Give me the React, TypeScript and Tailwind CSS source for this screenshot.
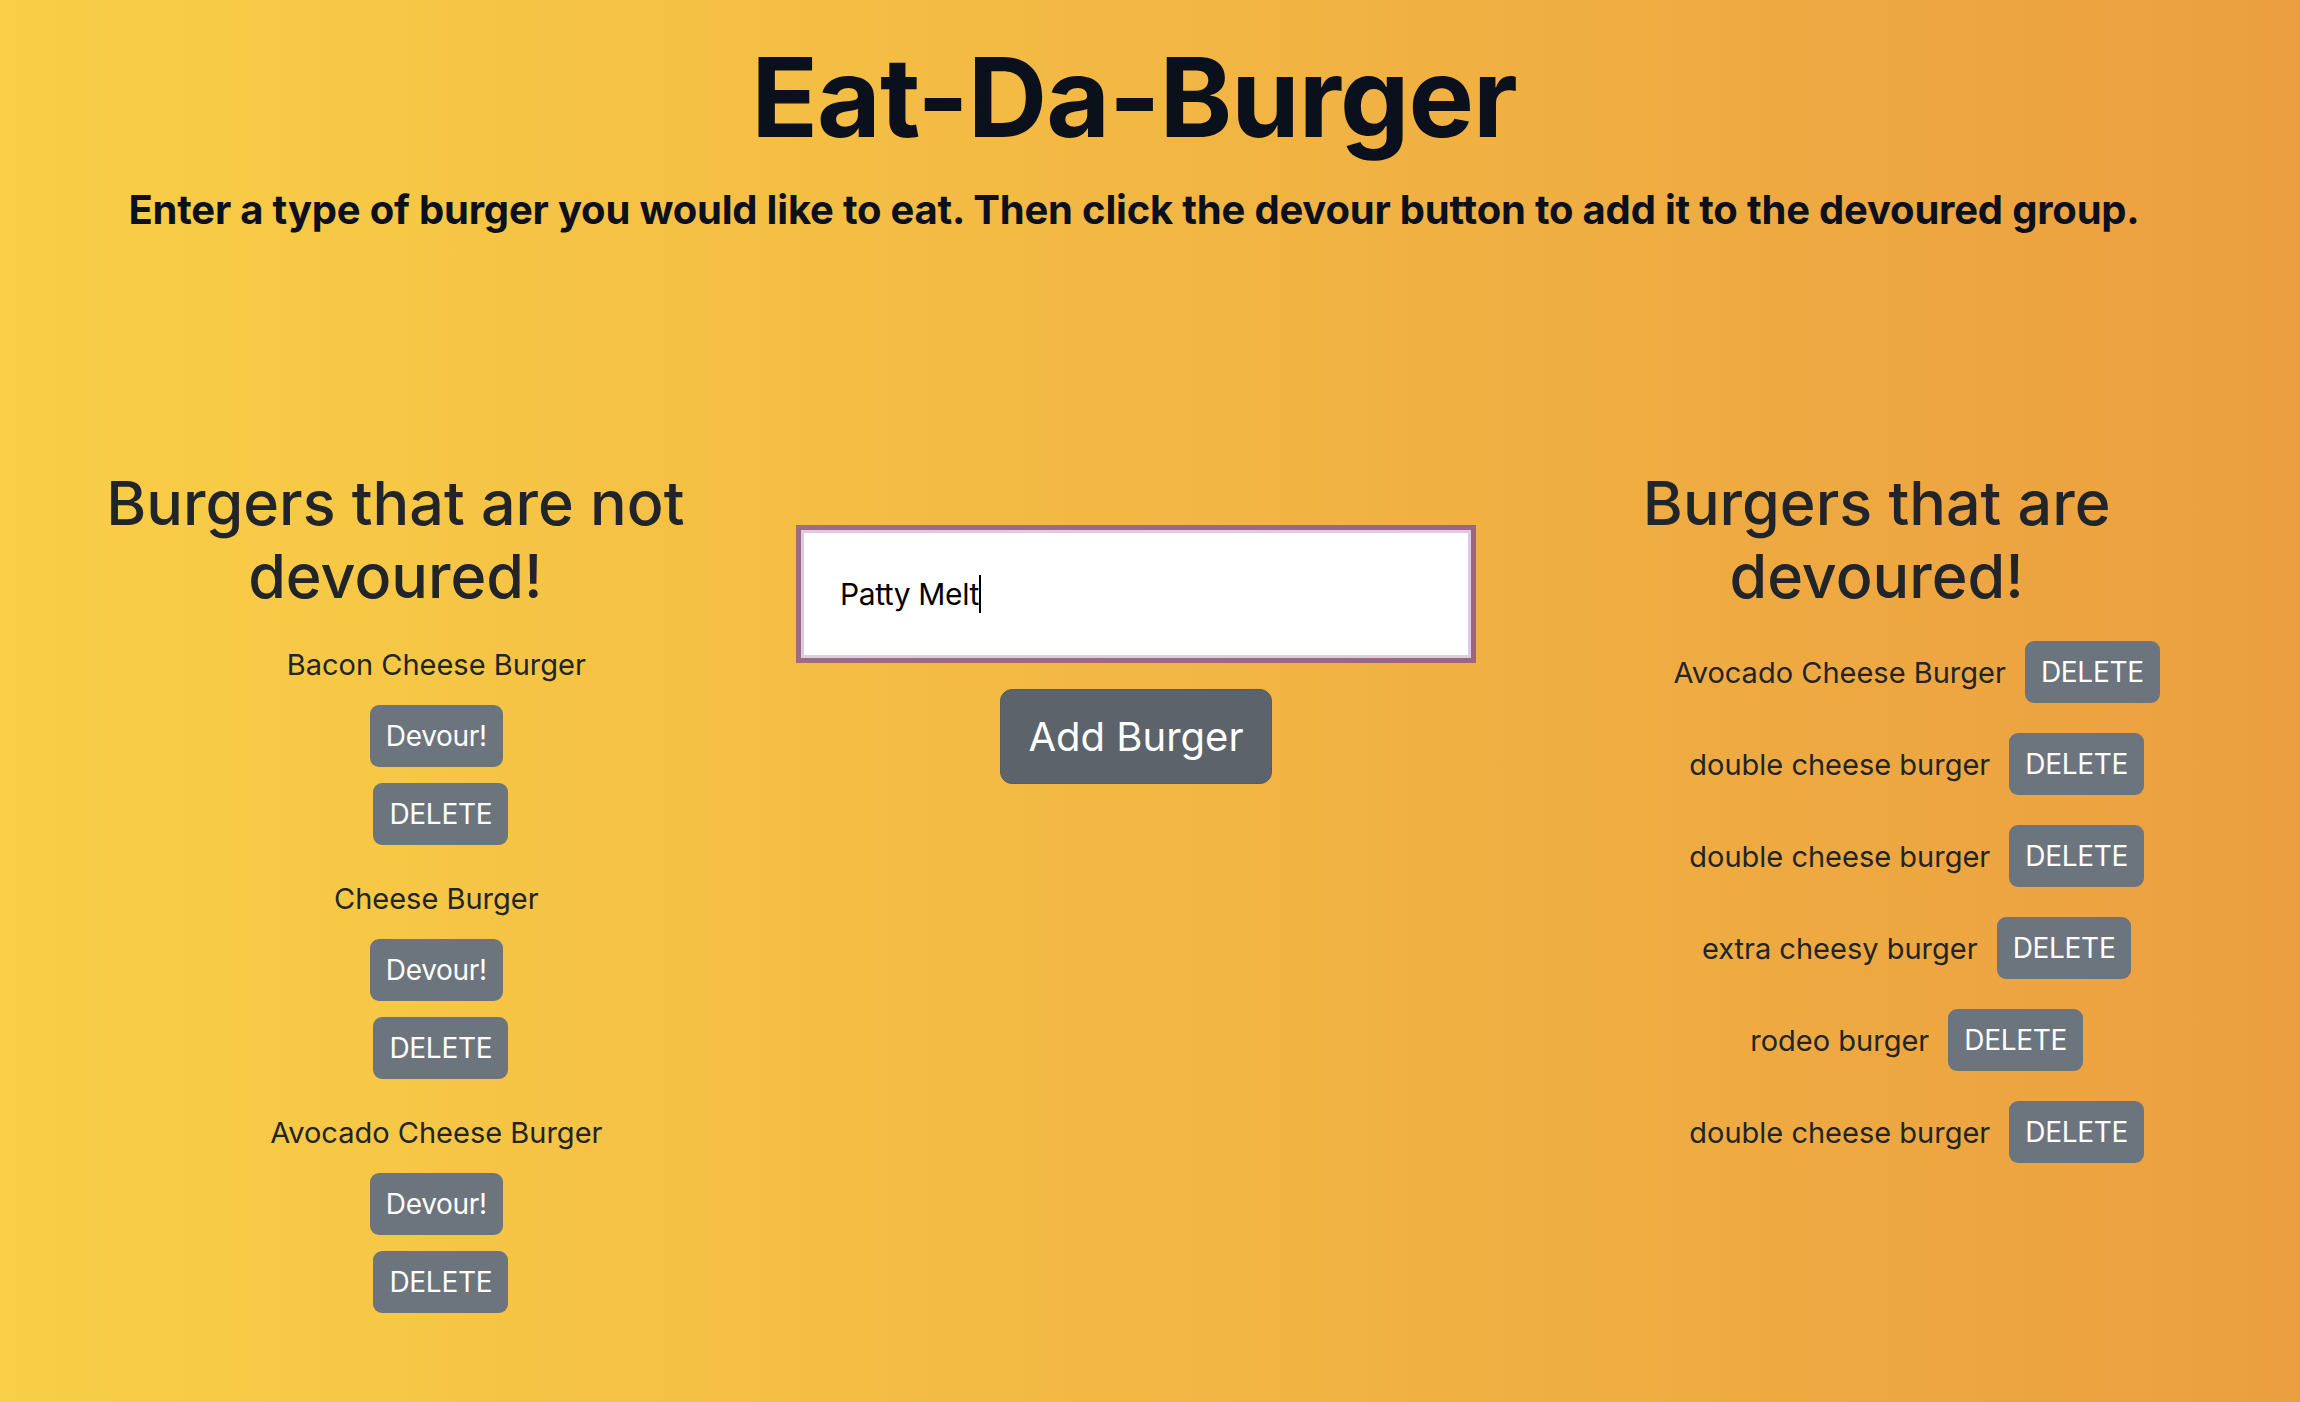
import { useState } from "react";

const notDevoured = ["Bacon Cheese Burger", "Cheese Burger", "Avocado Cheese Burger"];
const devoured = [
    "Avocado Cheese Burger",
    "double cheese burger",
    "double cheese burger",
    "extra cheesy burger",
    "rodeo burger",
    "double cheese burger",
];

function SmallButton({ label, className = "" }: { label: string; className?: string }) {
    return (
        <button className={`h-[62px] px-[16px] rounded-[9px] bg-[#6c757d] text-white text-[28px] leading-none tracking-[-0.3px] ${className}`}>
            {label}
        </button>
    );
}

export default function App() {
    const [burger] = useState("Patty Melt");

    return (
        <div className="min-h-[1402px] w-full bg-[linear-gradient(to_right,#f9cf47,#eb9f40)] font-['Inter',sans-serif] text-[#212529]">
            <header className="text-center pr-[32px] text-[#0b111c]">
                <h1 className="pt-[41px] text-[110px] leading-[112px] font-bold tracking-[-1px]">Eat-Da-Burger</h1>
                <p className="mt-[33px] text-[40px] leading-[48px] font-bold tracking-[-0.2px]">
                    Enter a type of burger you would like to eat. Then click the devour button to add it to the devoured group.
                </p>
            </header>

            <main className="ml-[25px] w-[2222px] mt-[233px] grid grid-cols-3">
                {/* not devoured */}
                <section className="flex flex-col items-center">
                    <h2 className="text-[61px] leading-[73px] font-medium text-center">
                        Burgers that are not<br />devoured!
                    </h2>
                    <ul className="mt-[30px] pl-[82px] flex flex-col items-center">
                        {notDevoured.map((b, i) => (
                            <li key={i} className="flex flex-col items-center mb-[32px]">
                                <span className="text-[29px] leading-[43px]">{b}</span>
                                <SmallButton label="Devour!" className="mt-[19px]" />
                                <SmallButton label="DELETE" className="mt-[16px] ml-[9px]" />
                            </li>
                        ))}
                    </ul>
                </section>

                {/* form */}
                <section className="flex flex-col items-center pt-[63px]">
                    <div className="w-[670px] h-[128px] bg-white border-[3px] border-[#dccbe6] shadow-[0_0_0_5px_rgba(85,40,185,0.55)] flex items-center pl-[36px] text-[30px] tracking-[-0.4px] text-black">
                        <span>{burger}</span>
                        <span className="w-[2px] h-[38px] bg-black" />
                    </div>
                    <button className="mt-[31px] w-[272px] h-[95px] rounded-[12px] bg-[#5c636a] border border-[#565e64] text-white text-[40px]">
                        Add Burger
                    </button>
                </section>

                {/* devoured */}
                <section className="flex flex-col items-center">
                    <h2 className="text-[61px] leading-[73px] font-medium text-center">
                        Burgers that are<br />devoured!
                    </h2>
                    <ul className="mt-[28px] pl-[80px] flex flex-col items-center">
                        {devoured.map((b, i) => (
                            <li key={i} className="flex items-center gap-[19px] mb-[30px]">
                                <span className="text-[29px] leading-[43px]">{b}</span>
                                <SmallButton label="DELETE" />
                            </li>
                        ))}
                    </ul>
                </section>
            </main>
        </div>
    );
}
